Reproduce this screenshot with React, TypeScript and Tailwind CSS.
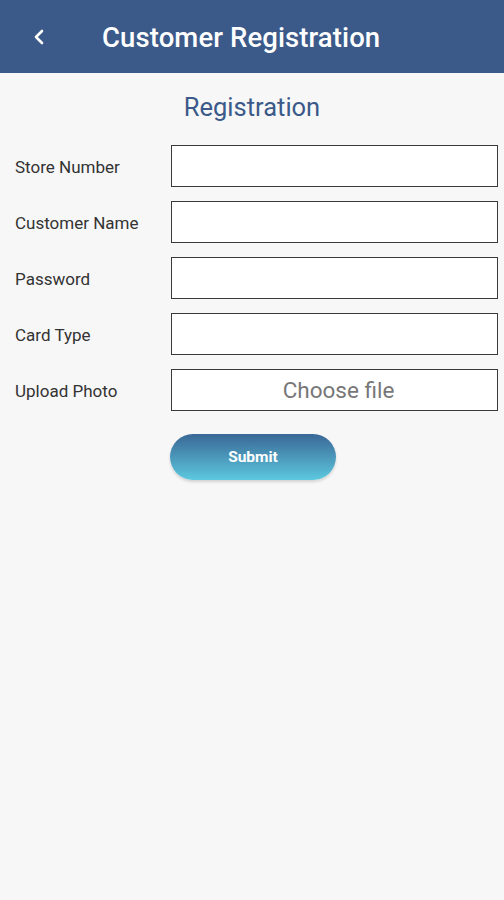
import React from 'react';

const fields = ['Store Number', 'Customer Name', 'Password', 'Card Type'];

export default function App() {
  return (
    <div className="min-h-[900px] w-[504px] bg-[#f7f7f7] font-['Roboto',_'Liberation_Sans',_sans-serif]">
      {/* Header */}
      <header className="flex h-[73px] items-center bg-[#3b5a89] text-white">
        <div className="flex w-[102px] items-center pl-[33px]">
          <svg width="12" height="16" viewBox="0 0 12 16" fill="none">
            <path d="M9 2L3 8l6 6" stroke="white" strokeWidth="2.6" strokeLinecap="round" strokeLinejoin="round" />
          </svg>
        </div>
        <h1 className="pt-[3px] text-[27.5px] font-medium tracking-[0.1px]">Customer Registration</h1>
      </header>

      <h2 className="mt-[17px] text-center text-[25.5px] leading-[34px] text-[#3b5a89]">Registration</h2>

      <div className="mt-[21px] flex flex-col gap-[14px] pr-[6px]">
        {fields.map((f) => (
          <div key={f} className="flex items-center">
            <label className="w-[171px] pl-[15px] pt-[3px] text-[17px] text-[#333333]">{f}</label>
            <div className="h-[42px] flex-1 border-[1.5px] border-[#3a3a3a] bg-white" />
          </div>
        ))}
        <div className="flex items-center">
          <label className="w-[171px] pl-[15px] pt-[3px] text-[17px] text-[#333333]">Upload Photo</label>
          <div className="flex h-[42px] flex-1 items-center justify-center border-[1.5px] border-[#3a3a3a] bg-white pl-[8px] pt-[2px] text-[22.5px] text-[#777777]">
            Choose file
          </div>
        </div>
      </div>

      <div className="mt-[23px] pl-[170px]">
        <button className="flex h-[46px] w-[166px] items-center justify-center rounded-full bg-gradient-to-b from-[#3a6896] to-[#5cc9df] pt-[2px] text-[15.5px] font-bold text-white shadow-[0_2px_3px_rgba(0,0,0,0.15)]">
          Submit
        </button>
      </div>
    </div>
  );
}
